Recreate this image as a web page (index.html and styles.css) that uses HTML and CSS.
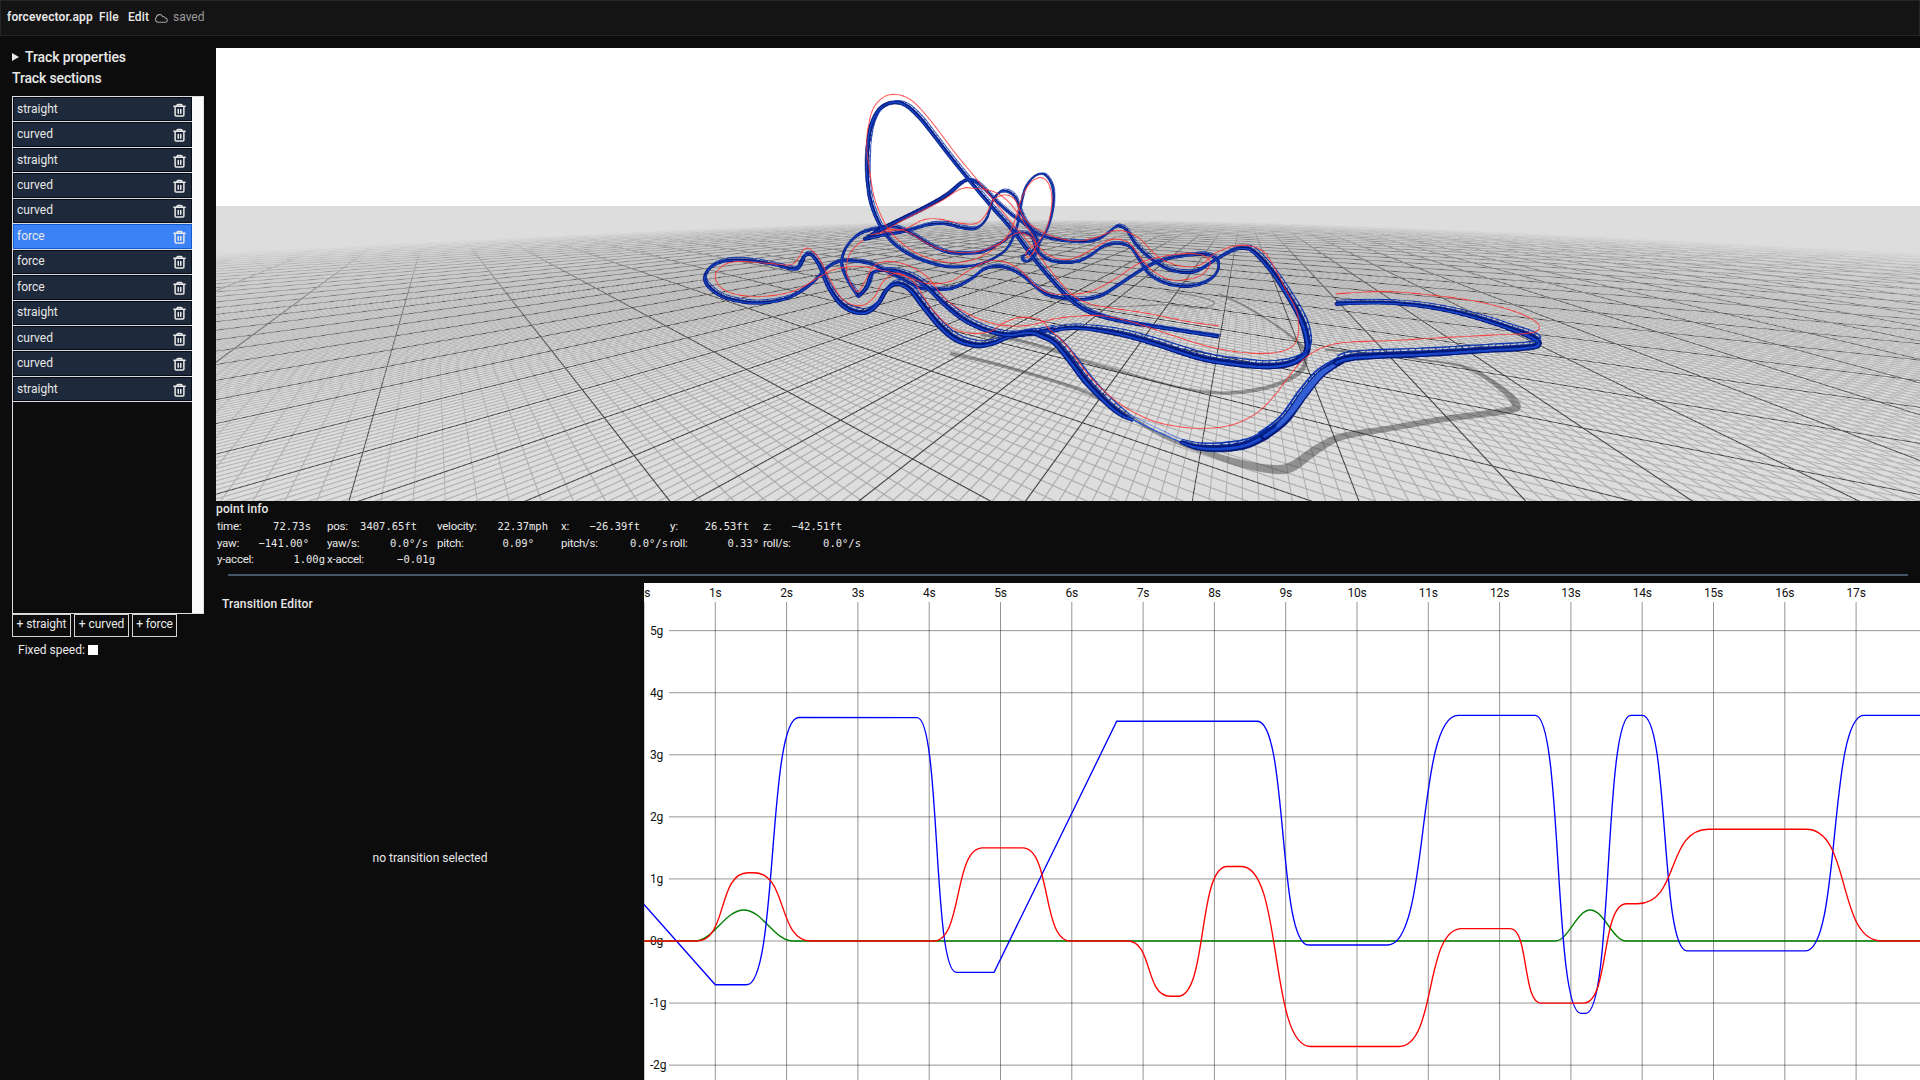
FILE: index.html
```html
<!DOCTYPE html>
<html lang="en">
<head>
<meta charset="utf-8">
<title>forcevector.app</title>
<link rel="stylesheet" href="styles.css">
</head>
<body>
<svg width="0" height="0" class="defs">
  <symbol id="trash" viewBox="0 0 24 24">
    <path d="M3 6h18M8 6V4.500A1.500 1.500 0 0 1 9.500 3h5A1.500 1.500 0 0 1 16 4.500V6M5 6v14a1.500 1.500 0 0 0 1.500 1.500h11A1.500 1.500 0 0 0 19 20V6M10 11v6M14 11v6" fill="none" stroke="currentColor" stroke-width="2.400" stroke-linecap="round"/>
  </symbol>
</svg>
<header class="menubar">
  <span class="brand">forcevector.app</span>
  <span class="menu-file">File</span>
  <span class="menu-edit">Edit</span>
  <svg class="cloud" viewBox="0 0 24 20"><path d="M6 17h12.500a4 4 0 0 0 .5-8 5 5 0 0 0-5-2.500A6 6 0 0 0 2.500 8 5.200 5.200 0 0 0 6 17Z" fill="none" stroke="currentColor" stroke-width="1.900"/></svg>
  <span class="saved">saved</span>
</header>
<div class="workspace">
  <aside class="sidebar">
    <div class="heading props"><svg class="caret" viewBox="0 0 7 8"><path d="M0 0l7 4-7 4z" fill="currentColor"/></svg><span>Track properties</span></div>
    <div class="heading sect"><span>Track sections</span></div>
    <div class="sections">
      <ul class="list">
        <li><span>straight</span><svg><use href="#trash"/></svg></li>
        <li><span>curved</span><svg><use href="#trash"/></svg></li>
        <li><span>straight</span><svg><use href="#trash"/></svg></li>
        <li><span>curved</span><svg><use href="#trash"/></svg></li>
        <li><span>curved</span><svg><use href="#trash"/></svg></li>
        <li class="selected"><span>force</span><svg><use href="#trash"/></svg></li>
        <li><span>force</span><svg><use href="#trash"/></svg></li>
        <li><span>force</span><svg><use href="#trash"/></svg></li>
        <li><span>straight</span><svg><use href="#trash"/></svg></li>
        <li><span>curved</span><svg><use href="#trash"/></svg></li>
        <li><span>curved</span><svg><use href="#trash"/></svg></li>
        <li><span>straight</span><svg><use href="#trash"/></svg></li>
      </ul>
      <div class="scrollbar"></div>
    </div>
    <div class="buttons"><button class="b1">+ straight</button><button class="b2">+ curved</button><button class="b3">+ force</button></div>
    <div class="fixed"><span>Fixed speed:</span><i class="check"></i></div>
  </aside>
  <main class="main">
    <canvas class="view" id="view" width="2556" height="680"></canvas>
    <section class="info">
      <h2>point info</h2>
      <div class="stats">
        <div><span>time:</span><b>72.73s</b></div><div><span>pos:</span><b>3407.65ft</b></div><div><span>velocity:</span><b>22.37mph</b></div><div><span>x:</span><b>−26.39ft</b></div><div><span>y:</span><b>26.53ft</b></div><div><span>z:</span><b>−42.51ft</b></div>
        <div><span>yaw:</span><b>−141.00°</b></div><div><span>yaw/s:</span><b>0.0°/s</b></div><div><span>pitch:</span><b>0.09°</b></div><div><span>pitch/s:</span><b>0.0°/s</b></div><div><span>roll:</span><b>0.33°</b></div><div><span>roll/s:</span><b>0.0°/s</b></div>
        <div><span>y-accel:</span><b>1.00g</b></div><div><span>x-accel:</span><b>−0.01g</b></div>
      </div>
    </section>
    <div class="rule"></div>
    <div class="bottom">
      <section class="editor"><h2>Transition Editor</h2><p>no transition selected</p></section>
      <svg class="chart" id="chart" viewBox="0 0 1276 497"></svg>
    </div>
  </main>
</div>
<script src="app.js"></script>
</body>
</html>
```
FILE: styles.css
```css
* { box-sizing: border-box; }
html, body { margin: 0; height: 100%; overflow: hidden; }
body {
  background: #0c0c0c;
  color: #e8e8e8;
  font: 12px/16px Roboto, sans-serif;
  display: flex;
  flex-direction: column;
}
.defs { display: none; }
.menubar {
  height: 36px;
  flex: none;
  background: #141414;
  border: 1px solid #262626;
  display: flex;
  align-items: center;
  padding: 0 0 2px 6px;
  white-space: nowrap;
}
.brand { font-weight: 600; width: 92px; letter-spacing: 0.12px; }
.menu-file { width: 29px; font-weight: 500; letter-spacing: 0.2px; }
.menu-edit { width: 27px; font-weight: 500; letter-spacing: 0.2px; }
.cloud { width: 13px; height: 11px; color: #a3a3a3; margin: 2px 5px 0 0; }
.saved { color: #9b9b9b; letter-spacing: 0; }
.workspace { display: flex; flex: 1; min-height: 0; }
.sidebar { width: 216px; flex: none; padding: 11px 0 0 12px; }
.heading { font-size: 14px; line-height: 20px; font-weight: 500; display: flex; align-items: center; letter-spacing: -0.1px; }
.caret { width: 7px; height: 8px; margin-right: 6px; }
.sect { height: 22px; margin-bottom: 7px; letter-spacing: -0.15px; }
.sections { width: 192px; height: 518px; border: 1px solid #dedee6; display: flex; }
.list { list-style: none; margin: 0; padding: 0; width: 179px; }
.list li {
  height: 25.45px;
  background: #1e293b;
  border-bottom: 1.4px solid #d9dce3;
  box-shadow: inset 0 0 0 1px #080b12;
  display: flex;
  align-items: center;
  justify-content: space-between;
  padding: 0 5px 1px 4px;
}
.list svg { width: 15px; height: 16px; margin-top: 2px; }
.list .selected { background: #3b82f6; box-shadow: inset 0 0 0 1px #155bd0; }
.scrollbar { flex: 1; background: #fafafa; }
.buttons { display: flex; gap: 3px; }
.buttons button {
  height: 23px;
  background: none;
  color: inherit;
  border: 1px solid #d4d4d8;
  font: inherit;
  padding: 0 0 3px;
  white-space: nowrap;
}
.b1 { width: 59px; letter-spacing: -0.05px; }
.b2 { width: 55px; }
.b3 { width: 45px; letter-spacing: -0.1px; }
.fixed { display: flex; padding: 5px 0 0 6px; gap: 2px; align-items: center; }
.fixed span { width: 68px; white-space: nowrap; }
.check { width: 10px; height: 10px; background: #fff; margin-top: -1px; }
.main { flex: 1; min-width: 0; padding-top: 12px; display: flex; flex-direction: column; }
.view { width: 1704px; height: 453px; flex: none; display: block; }
.info { height: 73px; flex: none; }
h2 { margin: 0; font-size: 12px; font-weight: 500; line-height: 16px; letter-spacing: 0.15px; }
.info h2 { height: 17px; }
.stats { display: grid; grid-template-columns: 110px 110px 124px 109px 93px 100px; line-height: 16.5px; padding-left: 1px; }
.stats > div { display: flex; justify-content: space-between; white-space: nowrap; height: 16.5px; }
.stats span { font-size: 11.5px; letter-spacing: -0.25px; }
.stats b { font: 10.5px/16.5px "DejaVu Sans Mono", monospace; }
.stats > :nth-child(1) { padding-right: 16px; }
.stats > :nth-child(2) { padding-right: 20px; }
.stats > :nth-child(3) { padding-right: 13px; }
.stats > :nth-child(4) { padding-right: 30px; }
.stats > :nth-child(5) { padding-right: 14px; }
.stats > :nth-child(6) { padding-right: 21px; }
.stats > :nth-child(7) { padding-right: 18px; }
.stats > :nth-child(8) { padding-right: 9px; }
.stats > :nth-child(9) { padding-right: 27px; }
.stats > :nth-child(10) { padding-right: 2px; }
.stats > :nth-child(11) { padding-right: 4px; }
.stats > :nth-child(12) { padding-right: 2px; }
.stats > :nth-child(13) { padding-right: 2px; }
.stats > :nth-child(14) { padding-right: 2px; }
.rule { height: 2px; flex: none; background: #475569; margin: 0 12px 7px; }
.bottom { display: flex; flex: 1; min-height: 0; }
.editor { width: 428px; flex: none; display: flex; flex-direction: column; padding: 13px 0 0 6px; }
.editor p { margin: 0 6px 0 0; flex: 1; display: flex; align-items: center; justify-content: center; padding-top: 23px; }
.chart { width: 1276px; height: 497px; background: #fff; display: block; }
.grid { stroke: #000; stroke-opacity: 0.42; stroke-width: 1; fill: none; }
.label { font: 12px Roboto, sans-serif; fill: #111; letter-spacing: -0.2px; }
.curve { fill: none; stroke-width: 1.35; }
```
FILE: app.js
```js
// ---- Force chart ----
const T = 71.3, G = 62.07, Y0 = 358;
const px = t => (t * T).toFixed(2), py = g => (Y0 - g * G).toFixed(2);
// Each step: [kind, time, value]; L is linear, S and B ease between values.
const series = [
  ['#008000', 0, 0, [['L',.71,0],['B',1.40,.5],['B',2.09,0],['L',12.78,0],['B',13.27,.5],['B',13.78,0],['L',18,0]]],
  ['#0000ff', 0, .59, [['L',1,-.705],['L',1.44,-.705],['S',2.17,3.6],['L',3.83,3.6],['S',4.38,-.505],['L',4.91,-.505],['L',6.63,3.54],['L',8.6,3.54],['S',9.32,-.065],['L',10.43,-.065],['S',11.42,3.635],['L',12.5,3.635],['S',13.14,-1.165],['L',13.21,-1.165],['S',13.84,3.635],['L',14,3.635],['S',14.63,-.16],['L',16.29,-.16],['S',17.11,3.635],['L',18,3.635]]],
  ['#ff0000', 0, 0, [['L',.74,0],['S',1.46,1.1],['L',1.54,1.1],['S',2.345,0],['L',4.06,0],['S',4.75,1.5],['L',5.31,1.5],['S',5.98,0],['L',6.78,0],['S',7.38,-.89],['L',7.49,-.89],['S',8.18,1.2],['L',8.38,1.2],['S',9.35,-1.7],['L',10.59,-1.7],['S',11.47,.2],['L',12.15,.2],['S',12.58,-1],['L',13.18,-1],['S',13.78,.6],['L',13.93,.6],['S',14.93,1.8],['L',16.3,1.8],['S',17.36,0],['L',18,0]]]
];
let out = '';
for (let s = 0; s <= 17; s++) {
  out += `<path class="grid" d="M${px(s)} 19V497"/><text class="label" text-anchor="middle" x="${px(s)}" y="14">${s}s</text>`;
}
for (let g = 5; g >= -2; g--) {
  out += `<path class="grid" d="M25 ${py(g)}H1276"/><text class="label" x="6" y="${Y0 - g * G + 4}">${g}g</text>`;
}
for (const [color, t0, g0, steps] of series) {
  let t = t0, g = g0, d = `M${px(t)} ${py(g)}`;
  for (const [k, nt, ng] of steps) {
    const e = k === 'S' ? .6 : .38;
    d += k === 'L' ? `L${px(nt)} ${py(ng)}` : `C${px(t + (nt - t) * e)} ${py(g)} ${px(nt - (nt - t) * e)} ${py(ng)} ${px(nt)} ${py(ng)}`;
    t = nt; g = ng;
  }
  out += `<path class="curve" stroke="${color}" d="${d}"/>`;
}
document.getElementById('chart').innerHTML = out;

// ---- Ground grid ----
const canvas = document.getElementById('view'), ctx = canvas.getContext('2d');
const W = canvas.width, H = canvas.height, R = 1.5;
const img = ctx.createImageData(W, H), data = img.data;
const line = (r, f) => { const q = r - .5, m = Math.abs(q - Math.floor(q) - .5); return m / f; };
for (let j = 0; j < H; j++) {
  const y = 48 + (j + .5) / R, h = y - 201;
  for (let i = 0; i < W; i++) {
    const o = (j * W + i) * 4;
    let c = 255;
    if (y >= 206) {
      const x = 216 + (i + .5) / R;
      const a = ((x - 434) / h + .283) / 1.068, b = ((x - 1243) / h + .169) / .555;
      const fa = (1 / h + Math.abs(x - 434) / (h * h)) / 1.068 / R;
      const fb = (1 / h + Math.abs(x - 1243) / (h * h)) / .555 / R;
      const g1 = 1 - Math.min(Math.min(line(a * 10, fa * 10), line(b * 10, fb * 10)), 1);
      const g2 = 1 - Math.min(Math.min(line(a, fa), line(b, fb)), 1);
      const v = (y - 275) / 325, D = .222 + v * .975, F = .975 - v * .222, S = (x - 1068) / 325;
      const dist = Math.hypot(F, S) / D;
      const fade = Math.max(0, 1 - dist / 18);
      const far = Math.max(.55, 1 - dist / 22);
      const al = Math.min(1, (g1 * .58 * far + g2 * .55) * Math.min(1, fade * 1.15));
      c = 221 * (1 - al) + (105 * (1 - g2) + 20 * g2) * al;
    }
    data[o] = data[o + 1] = data[o + 2] = c;
    data[o + 3] = 255;
  }
}
ctx.putImageData(img, 0, 0);

// ---- Track ----
// Track coordinates are in thirds of a pixel from (640, 60).
const P = s => s.trim().split(/\s+/).map(p => p.split(',').map(Number));
// The near part of the layout has its own origin.
const N = s => P(s).map(([x, y, w]) => [1230 + x * 1.033, 360 + y, w]);
const spline = pts => {
  const res = [];
  let w = 8;
  pts = pts.map(p => { if (p[2]) w = p[2]; return [(424 + p[0] / 3) * R, (12 + p[1] / 3) * R, w / 3 * R]; });
  for (let i = 0; i < pts.length - 1; i++) {
    const p0 = pts[i - 1] || pts[i], p1 = pts[i], p2 = pts[i + 1], p3 = pts[i + 2] || p2;
    const n = Math.max(3, Math.ceil(Math.hypot(p2[0] - p1[0], p2[1] - p1[1]) / 2));
    for (let k = 0; k < n; k++) {
      const t = k / n, q = [];
      for (let c = 0; c < 2; c++) q[c] = .5 * (2 * p1[c] + (p2[c] - p0[c]) * t + (2 * p0[c] - 5 * p1[c] + 4 * p2[c] - p3[c]) * t * t + (3 * p1[c] - p0[c] - 3 * p2[c] + p3[c]) * t * t * t);
      q[2] = p1[2] + (p2[2] - p1[2]) * t;
      res.push(q);
    }
  }
  res.push(pts[pts.length - 1]);
  return res;
};
const stroke = (pts, color, scale, dx, dy, fixed) => {
  ctx.strokeStyle = color;
  ctx.lineCap = 'butt';
  ctx.lineJoin = 'round';
  if (fixed) {
    ctx.lineWidth = fixed;
    ctx.beginPath();
    pts.forEach(p => ctx.lineTo(p[0] + dx * p[2], p[1] + dy * p[2]));
    ctx.stroke();
    return;
  }
  for (let i = 1; i < pts.length; i++) {
    const a = pts[i - 1], b = pts[i];
    ctx.lineCap = i === 1 || i === pts.length - 1 ? 'butt' : 'round';
    ctx.lineWidth = Math.max(1, b[2] * scale);
    ctx.beginPath();
    ctx.moveTo(a[0] + dx * a[2], a[1] + dy * a[2]);
    ctx.lineTo(b[0] + dx * b[2], b[1] + dy * b[2]);
    ctx.stroke();
  }
};
const shadow = pts => {
  const s = spline(pts);
  ctx.fillStyle = 'rgba(40,40,40,.42)';
  const l = [], r = [];
  s.forEach((p, i) => {
    const a = s[Math.max(0, i - 1)], b = s[Math.min(s.length - 1, i + 1)];
    const d = Math.hypot(b[0] - a[0], b[1] - a[1]) || 1, nx = -(b[1] - a[1]) / d, ny = (b[0] - a[0]) / d;
    l.push([p[0] + nx * p[2] / 2, p[1] + ny * p[2] / 2]);
    r.unshift([p[0] - nx * p[2] / 2, p[1] - ny * p[2] / 2]);
  });
  ctx.beginPath();
  l.concat(r).forEach(p => ctx.lineTo(p[0], p[1]));
  ctx.fill();
};
const track = (pts, ux, uy) => {
  const s = spline(pts);
  // Ties between the two running rails
  let run = 0;
  ctx.strokeStyle = 'rgba(6,28,130,.85)';
  ctx.lineCap = 'butt';
  for (let i = 1; i < s.length; i++) {
    const p = s[i];
    run += Math.hypot(p[0] - s[i - 1][0], p[1] - s[i - 1][1]);
    if (run > p[2] * .7 + 2) {
      run = 0;
      ctx.lineWidth = Math.max(1, p[2] * .15);
      ctx.beginPath();
      ctx.moveTo(p[0], p[1]);
      ctx.lineTo(p[0] + ux * 1.15 * p[2], p[1] + uy * 1.15 * p[2]);
      ctx.stroke();
    }
  }
  stroke(s, '#041878', .84, 0, 0);
  stroke(s, '#1a48cc', .3, -ux * .1, -uy * .1);
  stroke(s, 'rgba(8,40,150,.9)', .15, ux * .62, uy * .62);
  stroke(s, '#1038b0', .18, ux * 1.15, uy * 1.15);
};
const heart = pts => stroke(spline(pts), 'rgba(255,50,50,.9)', 0, 0, 0, 1.4);

shadow(N('-290,520,10 -150,555 0,600 110,640 200,690 330,770 460,820,16 550,850,22 640,868,26 700,862,30 780,805,26 850,770,20 980,747,18 1150,717,18 1330,692,20 1352,670,24 1290,610,14 1200,560,8 1080,540,5 950,522,4 800,510,8'));
shadow(N('-200,465,10 -100,480 0,508,9 110,547,9 200,573 300,603,7 400,628 500,640,10 600,630,12 680,605 735,565,14 737,510,11 700,470,7 640,425,5 560,375 490,342,4'));
shadow(N('0,355,3 160,380 340,375 440,385 477,368 430,350 340,335'));

// Far inversions and the upper return
track(P('672,538,14 700,532,12 740,524,10 790,516,9 830,505 870,494 920,493 970,505 1010,505,8 1040,475 1055,430 1075,400 1100,395 1125,412 1140,450 1160,490 1190,520 1240,538,8 1320,547 1370,540 1400,522 1425,502 1440,500 1460,512').concat(N('250,195,9 290,235 340,267 390,278,10 430,272 480,240 530,212,11 560,205 590,215,13 640,270,15 680,330,17 720,400,19 740,450,22 748,500,22 735,530,23 690,553,22 620,560,20 520,550,20 430,533,20 300,490,18 200,462,17 110,447,14 50,445 0,455,15')), .45, -.75);
track(P('655,710,12 622,660,9 605,610,10 620,560,9 660,522,9 720,505,8 770,503,8 820,525 870,555 920,577 970,582 1030,575 1090,545 1115,525 1150,520 1175,532 1190,570 1220,598 1260,608 1310,606 1350,588 1390,560 1430,552 1470,562').concat(N('262,245,9 290,285 340,312 395,320,9 440,312 475,290 490,260 480,235 450,224 400,227,9 330,240 270,268,10 200,315 150,347 100,359 50,357 0,348')).concat(P('1200,692,9 1150,650 1110,628 1070,620 1030,630 990,660 940,685 890,690 840,685 800,665 750,640 700,615 650,605 600,605 560,625,10 510,675 450,712 380,728,11 320,728 250,712 205,680,12 195,650 215,620,10 260,603 330,603 400,614,9 465,628,11 485,605,16 495,587,12 515,586,10 540,620,14 565,680 600,730,16 640,755 680,757,16 715,730 740,690,15 770,672,14 810,690,17 850,740,19 900,800 950,840,19 1010,857,18 1060,850,16 1110,830,16 1170,822,15 1240,808,14')), .3, -.75);
track(P('655,710,12 680,682,15 695,642,12 720,632,10 760,632,11 810,648,12 860,682,13 920,740,15 980,785 1050,815 1110,825,16 1170,818,17 1205,828,20').concat(N('15,490,20 60,545,22 100,600 150,655,20 200,700,18 240,722,10')), .65, -.6);
// Edge-on part at the bottom of the drop, where only the rails show
{
  const s = spline(N('225,712,10 300,750 370,783 400,795'));
  stroke(s, '#1c4fd8', .3, 0, 0);
  stroke(s, '#4a76ea', .2, .3, -.9);
}
track(N('380,787,12 430,803,20 500,806,26 570,795,28 630,765,30'), .25, -.6);
track(N('620,770,30 655,745,30 690,712,30 740,640,30 790,580,28 850,540,24'), -.45, -.28);
stroke(spline(N('660,740,10 700,697,18 745,632,22 790,580,18 840,548,8')), '#3560d4', .85, 0, 0);
track(N('830,548,24 860,537,24 920,530,22 1100,522,21 1250,512,20 1390,503,20 1420,490,20 1395,470,20 1340,448,16 1250,417,15 1150,391,14 1050,375,13 950,369,12 830,372,13'), .2, -.75);
// Lift hill, loop and first drop
track(P('1734,830,13 1592,808 1440,783,13 1350,757,14 1290,718,13 1230,655,12 1180,595 1120,515 1050,435 985,358 930,290,12 880,225 840,175,13 800,138 765,127 730,138,14 705,168 688,220 681,300 684,380,12 696,440 722,500,11 760,550,10 820,590 900,617,9 960,621 1020,612,8 1070,590 1105,560 1130,500,7 1137,460 1150,400 1165,368 1190,345 1215,345 1235,375 1240,420 1230,480 1210,530 1185,565 1165,580 1147,590,8 1150,602 1165,603 1185,585,10 1193,555 1180,520,9 1150,490 1115,465 1070,425,9 1020,375 990,360,10 965,368,13 920,405,15 860,440 790,475,15 720,510,15 672,538,8'), .6, -.35);

heart(P('1736,798 1643,785 1519,760 1416,745 1344,730 1292,700 1230,630 1180,565 1100,470 1020,370 950,285 890,205 840,145 805,115 765,103 730,112 700,145 685,200 680,260 690,340 705,420 740,500 780,545 840,585 920,607 990,602 1050,575 1100,530 1125,480 1145,415 1170,370 1200,353 1225,370 1236,420 1225,490 1200,540 1170,565 1158,580 1165,592 1185,570 1185,540 1160,500 1110,430 1060,395 1000,385 960,388 900,425 800,475 720,520'));
heart(P('690,525 760,512 800,505 850,480 900,478 960,490 1010,490 1040,460 1060,420 1095,405 1125,420 1150,470 1180,500 1240,530 1310,543 1370,532 1430,512 1490,530').concat(N('320,235 390,260 440,253 480,220 530,200 575,197 620,215 650,260 680,320 715,390 722,440 715,485 690,508 640,520 560,518 460,500 350,465 250,430 150,408 70,410')).concat(P('1240,778 1160,797 1080,795 1000,770 920,720 860,650 800,615 740,605 700,620 675,665 650,695 620,640 630,580 670,540')));
heart(P('740,508 800,515 860,550 920,573 1000,577 1070,555 1130,520 1170,530 1195,560 1235,590 1290,598 1350,572 1410,540 1460,545').concat(N('250,215 290,265 340,297 390,300 440,285 465,250 440,225 370,223 270,245 200,290 130,330 70,343')).concat(P('1240,702 1190,680 1140,630 1090,605 1040,605 990,630 930,665 860,670 800,650 720,630 660,620 590,627 540,650 470,690 390,708 300,706 245,685 226,650 245,620 290,605 380,610 450,615 475,595 490,570 510,567 540,600 570,660 610,720 660,738 700,715 730,665 770,640 820,665 870,740 930,800 990,820 1050,815 1090,790 1140,773 1200,780')).concat(N('0,450 50,500 120,595 200,670 290,720 370,740 450,746 530,735 600,700 650,650 690,595 740,535 800,500 870,487 1000,482 1150,473 1300,465 1390,460 1420,448 1410,425 1350,395 1240,365 1100,345 970,335 830,342')));
```
